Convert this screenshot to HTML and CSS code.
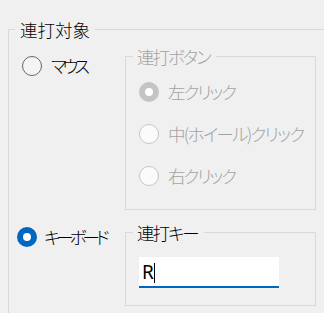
FILE: index.html
```html
<!DOCTYPE html>
<html lang="ja">
<head>
<meta charset="utf-8">
<link rel="stylesheet" href="styles.css">
</head>
<body>
<fieldset class="group outer">
  <legend class="legend">連打対象</legend>
  <div class="layout">
    <div class="opt target-mouse"><span class="radio"></span><span class="label narrow">マウス</span></div>
    <fieldset class="group inner disabled">
      <legend class="legend tight">連打ボタン</legend>
      <div class="opts">
        <div class="opt row"><span class="radio dis-on"></span><span class="label">左クリック</span></div>
        <div class="opt row"><span class="radio dis"></span><span class="label wide">中(ホイール)クリック</span></div>
        <div class="opt row"><span class="radio dis"></span><span class="label">右クリック</span></div>
      </div>
    </fieldset>
    <div class="opt target-key"><span class="radio on"></span><span class="label narrow">キーボード</span></div>
    <fieldset class="group inner keybox">
      <legend class="legend tight">連打キー</legend>
      <div class="textbox"><span class="value">R</span><span class="caret"></span></div>
    </fieldset>
  </div>
</fieldset>
</body>
</html>
```
FILE: styles.css
```css
html, body {
  margin: 0;
  padding: 0;
  background: #f0f0f0;
  overflow: hidden;
  width: 324px;
  height: 313px;
}
body {
  font-family: "Noto Sans CJK JP", "Noto Sans", sans-serif;
  font-feature-settings: "palt";
  font-size: 17.5px;
  font-weight: 300;
  color: #000;
}
.group {
  border: 1px solid #d9d9d9;
  margin: 0;
  min-width: 0;
}
.legend {
  line-height: 21px;
  height: 21px;
  padding: 0 4px;
  margin-left: 7px;
  white-space: nowrap;
}
.tight {
  letter-spacing: -2px;
  padding: 0 6px 0 4px;
}
.outer {
  margin: 19px 0 0 8px;
  padding: 6px 0 7px 0;
  border-right: none;
  border-bottom: none;
}
.outer > .legend {
  margin-left: 6px;
  padding: 0 5px;
}
.layout {
  display: grid;
  grid-template-columns: 116px 191px;
  row-gap: 12px;
  align-items: start;
}
.opt {
  display: flex;
  align-items: center;
  gap: 9px;
  line-height: 20px;
  white-space: nowrap;
}
.label {
  letter-spacing: -2px;
}
.label.narrow {
  letter-spacing: -4px;
}
.label.wide {
  letter-spacing: -1.7px;
}
.target-mouse {
  margin-top: 10px;
  padding-left: 13px;
  height: 20px;
}
.target-key {
  margin-top: 5px;
  padding-left: 8px;
  height: 20px;
  gap: 7px;
}
.radio {
  box-sizing: border-box;
  width: 20px;
  height: 20px;
  flex: none;
  border-radius: 50%;
  border: 1px solid #666;
  background: #f4f4f4;
}
.radio.on {
  border: 6px solid #0067c0;
  background: #fff;
}
.radio.dis {
  border-color: #c6c6c6;
  background: #fbfbfb;
}
.radio.dis-on {
  border: 6px solid #c4c4c4;
  background: #fff;
}
.inner {
  padding: 4px 0 12px 0;
}
.disabled {
  color: #a3a3a3;
}
.opts {
  padding-left: 13px;
}
.row {
  height: 42px;
}
.keybox {
  padding: 14px 0 17px 0;
}
.textbox {
  box-sizing: border-box;
  margin-left: 13px;
  width: 140px;
  height: 31px;
  background: #fff;
  border-bottom: 2px solid #0067c0;
  padding: 1px 0 0 3px;
  font-family: "Noto Sans", sans-serif;
  font-weight: 400;
  font-size: 19px;
  line-height: 28px;
  color: #000;
  white-space: nowrap;
}
.caret {
  display: inline-block;
  width: 1px;
  height: 20px;
  background: #000;
  vertical-align: -4px;
  margin-left: 0;
}
```
